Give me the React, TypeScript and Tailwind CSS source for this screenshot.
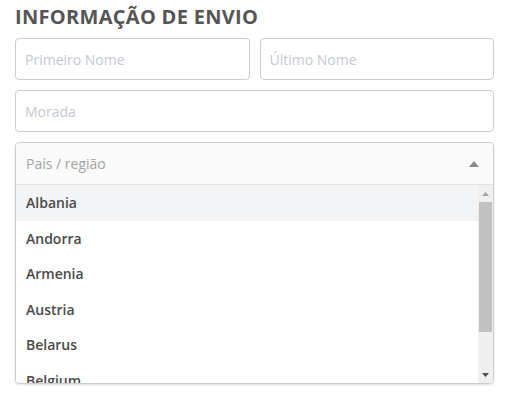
import React from "react";

const countries = ["Albania", "Andorra", "Armenia", "Austria", "Belarus", "Belgium"];

export default function App() {
  return (
    <div className="w-[516px] h-[403px] bg-white overflow-hidden" style={{ fontFamily: '"Open Sans", sans-serif' }}>
      <div className="pl-[15px] pt-[2px] w-[494px]">
        <h2 className="text-[20px] leading-[29px] font-bold text-[#555] tracking-[0.3px]">INFORMAÇÃO DE ENVIO</h2>
        <div className="mt-[7px] flex gap-[10px]">
          <div className="flex-1 h-[42px] border border-[#ccc] rounded-[4px] flex items-center px-[9px] text-[14px] text-[#c5c9d1]">Primeiro Nome</div>
          <div className="flex-1 h-[42px] border border-[#ccc] rounded-[4px] flex items-center px-[9px] text-[14px] text-[#c5c9d1]">Último Nome</div>
        </div>
        <div className="mt-[10px] h-[42px] border border-[#ccc] rounded-[4px] flex items-center px-[9px] text-[14px] text-[#c5c9d1]">Morada</div>
        <div className="mt-[10px] border border-[#ccc] rounded-[4px] shadow-[0_1px_2px_rgba(0,0,0,0.12)] overflow-hidden">
          <div className="h-[42px] bg-[#fafafa] border-b border-[#e2e2e2] flex items-center justify-between pl-[10px] pr-[14px] text-[14px] text-[#a5a5a5]">
            <span>País / região</span>
            <svg width="10" height="6" viewBox="0 0 10 6"><path d="M0 6 L5 0 L10 6 Z" fill="#888" /></svg>
          </div>
          <div className="flex h-[198px]">
            <div className="flex-1 overflow-hidden">
              {countries.map((c, i) => (
                <div key={c} className={`h-[35.5px] flex items-center pl-[10px] text-[14px] text-[#4a4a4a] ${i === 0 ? "bg-[#f3f4f6] font-semibold" : "font-[560]"}`}>{c}</div>
              ))}
            </div>
            <div className="w-[15px] bg-[#f0f0f0] flex flex-col items-center">
              <div className="h-[17px] flex items-center justify-center">
                <svg width="7" height="4" viewBox="0 0 7 4"><path d="M0 4 L3.5 0 L7 4 Z" fill="#a3a3a3" /></svg>
              </div>
              <div className="w-[13px] h-[130px] bg-[#c1c1c1]" />
              <div className="flex-1" />
              <div className="h-[17px] flex items-center justify-center">
                <svg width="7" height="4" viewBox="0 0 7 4"><path d="M0 0 L7 0 L3.5 4 Z" fill="#505050" /></svg>
              </div>
            </div>
          </div>
        </div>
      </div>
    </div>
  );
}
